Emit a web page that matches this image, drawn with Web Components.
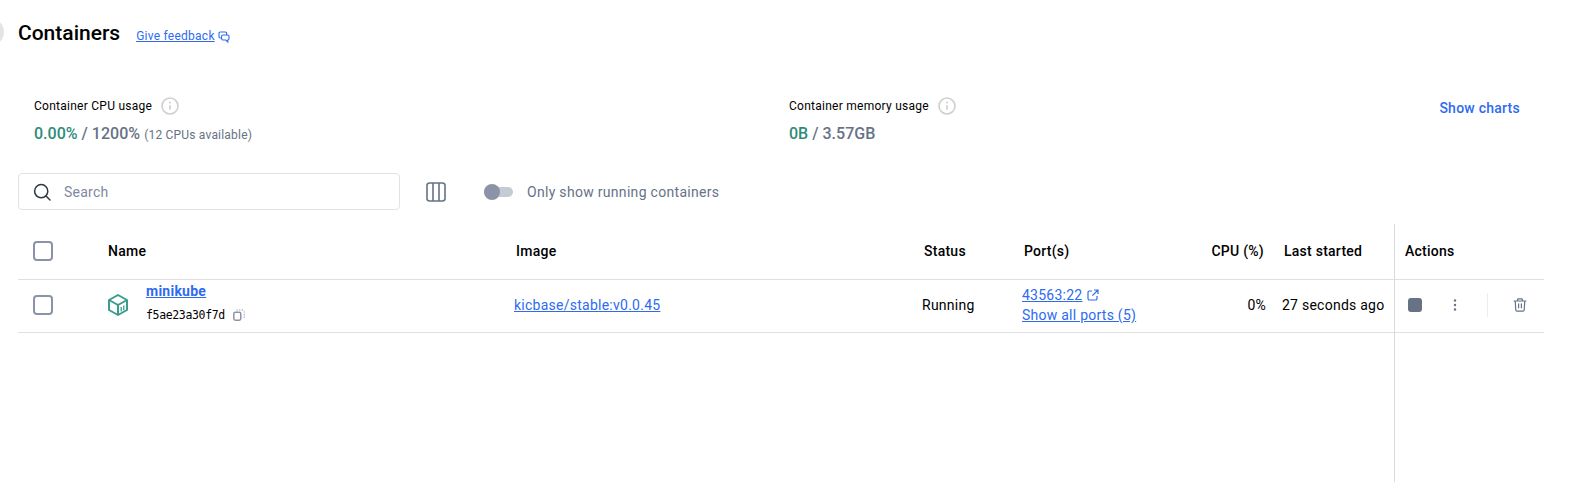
<!DOCTYPE html>
<html>
<head>
<meta charset="utf-8">
<title>Containers</title>
<style>
  html, body { margin: 0; height: 482px; overflow: hidden; background: #fff; }
  body { font-family: Roboto, "Liberation Sans", sans-serif; color: #000; }
</style>
</head>
<body>
<containers-page>
  <page-header slot="header" title="Containers"></page-header>
  <usage-stats slot="stats"></usage-stats>
  <table-toolbar slot="toolbar"></table-toolbar>
  <containers-table slot="table"></containers-table>
</containers-page>

<script>
const ICONS = {
  info: `<svg width="18" height="18" viewBox="0 0 18 18" fill="none"><circle cx="9" cy="9" r="8" stroke="#cfcfcf" stroke-width="1.6"/><circle cx="9" cy="5.6" r="1" fill="#cfcfcf"/><path d="M9 8.2v4.6" stroke="#cfcfcf" stroke-width="1.6"/></svg>`,
  feedback: `<svg width="12" height="12" viewBox="0 0 12 12" fill="none" stroke="#2e6bf0" stroke-width="1.1"><path d="M8.6 4V2.2A1.2 1.2 0 0 0 7.4 1H2.2A1.2 1.2 0 0 0 1 2.2v3.6A1.2 1.2 0 0 0 2.2 7h1.4"/><path d="M4.8 4h5a1.2 1.2 0 0 1 1.2 1.2v2.6A1.2 1.2 0 0 1 9.8 9v2L7.8 9H4.8a1.2 1.2 0 0 1-1.2-1.2V5.2A1.2 1.2 0 0 1 4.8 4z"/></svg>`,
  search: `<svg width="20" height="20" viewBox="0 0 20 20" fill="none" stroke="#2f3744" stroke-width="1.5"><circle cx="9.2" cy="9.2" r="6.6"/><path d="M14 14l4 4" stroke-linecap="round"/></svg>`,
  columns: `<svg width="20" height="20" viewBox="0 0 20 20" fill="none" stroke="#677285" stroke-width="1.6"><rect x="1" y="1" width="18" height="18" rx="2.5"/><path d="M7 1v18M13 1v18"/></svg>`,
  box: `<svg width="20" height="22" viewBox="0 0 20 22" fill="none" stroke="#3a9d8b" stroke-width="2" stroke-linejoin="round"><path d="M10 1l9 5v10l-9 5-9-5V6z"/><path d="M1 6l9 5 9-5M10 11v10"/><path d="M13.2 13v4.6M15.8 11.6v4.6" stroke-width="1.3"/></svg>`,
  copy: `<svg width="12" height="12" viewBox="0 0 12 12" fill="none" stroke="#8b93a5" stroke-width="1.5"><rect x=".8" y="3.2" width="7" height="8" rx="1.6"/><path d="M3.6 1h1.2M6.2 1h1.2M8.8 1h1.4M11.2 2.4v1.2M11.2 5v1.2M11.2 7.6v1.2" stroke-width="1.1"/></svg>`,
  external: `<svg width="12" height="12" viewBox="0 0 12 12" fill="none" stroke="#2e6bf0" stroke-width="1.2"><path d="M5 2H2.4A1.4 1.4 0 0 0 1 3.4v6.2A1.4 1.4 0 0 0 2.4 11h6.2A1.4 1.4 0 0 0 10 9.6V7"/><path d="M7 1h4v4M11 1L5.4 6.6"/></svg>`,
  dots: `<svg width="4" height="12" viewBox="0 0 4 12" fill="#677285"><circle cx="2" cy="1.5" r="1.2"/><circle cx="2" cy="6" r="1.2"/><circle cx="2" cy="10.5" r="1.2"/></svg>`,
  trash: `<svg width="14" height="14" viewBox="0 0 14 14" fill="none" stroke="#677285" stroke-width="1.2"><path d="M.6 3h12.8M4.6 3V1.6a.8.8 0 0 1 .8-.8h3.2a.8.8 0 0 1 .8.8V3"/><path d="M2.2 3l.6 9a1.2 1.2 0 0 0 1.2 1.1h6A1.2 1.2 0 0 0 11.2 12l.6-9"/><path d="M5.6 5.6v4.6M8.4 5.6v4.6"/></svg>`
};

class ContainersPage extends HTMLElement {
  constructor() {
    super();
    this.attachShadow({mode: 'open'}).innerHTML = `
      <style>
        :host { display: flex; flex-direction: column; height: 482px; }
        ::slotted([slot=table]) { flex: 1; min-height: 0; }
      </style>
      <slot name="header"></slot>
      <slot name="stats"></slot>
      <slot name="toolbar"></slot>
      <slot name="table"></slot>
    `;
  }
}

class PageHeader extends HTMLElement {
  constructor() {
    super();
    this.attachShadow({mode: 'open'}).innerHTML = `
      <style>
        :host { display: flex; align-items: center; height: 64px; overflow: hidden; }
        .avatar { width: 28px; height: 28px; border-radius: 50%; background: #e4e4e6; margin-left: -24px; margin-right: 14px; flex: none; }
        h1 { margin: 1px 0 0; font-size: 21px; line-height: 28px; font-weight: 500; color: #000; }
        a { margin-left: 16px; margin-top: 7px; font-size: 12px; color: #2e6bf0; text-decoration: underline; letter-spacing: .25px; }
        svg { display: block; }
        .fb { margin: 10px 0 0 3px; }
      </style>
      <div class="avatar"></div>
      <h1>${this.getAttribute('title')}</h1>
      <a href="#">Give feedback</a>
      <span class="fb">${ICONS.feedback}</span>
    `;
  }
}

class StatBlock extends HTMLElement {
  constructor() {
    super();
    this.attachShadow({mode: 'open'}).innerHTML = `
      <style>
        :host { display: block; }
        .label { display: flex; align-items: center; gap: 9px; height: 20px; font-size: 12px; color: #000; letter-spacing: .26px; }
        .label svg { display: block; }
        .value { margin-top: 8px; height: 20px; line-height: 20px; font-size: 16px; font-weight: 500; color: #677285; white-space: nowrap; letter-spacing: .02px; }
        .used { color: #2e8b7a; }
        small { font-size: 12px; font-weight: 400; letter-spacing: .2px; }
      </style>
      <div class="label"><span>${this.getAttribute('label')}</span>${ICONS.info}</div>
      <div class="value"><span class="used">${this.getAttribute('used')}</span> / ${this.getAttribute('total')} <small>${this.getAttribute('note') || ''}</small></div>
    `;
  }
}

class UsageStats extends HTMLElement {
  constructor() {
    super();
    this.attachShadow({mode: 'open'}).innerHTML = `
      <style>
        :host { display: grid; grid-template-columns: 755px 1fr auto; padding: 32px 64px 0 34px; height: 78px; box-sizing: border-box; }
        .charts { font-size: 14px; font-weight: 500; color: #2e6bf0; margin-top: 2px; line-height: 20px; letter-spacing: .25px; text-decoration: none; }
      </style>
      <stat-block label="Container CPU usage" used="0.00%" total="1200%" note="(12 CPUs available)"></stat-block>
      <stat-block label="Container memory usage" used="0B" total="3.57GB"></stat-block>
      <a class="charts" href="#">Show charts</a>
    `;
  }
}

class SearchBox extends HTMLElement {
  constructor() {
    super();
    this.attachShadow({mode: 'open'}).innerHTML = `
      <style>
        :host { display: flex; align-items: center; gap: 12px; box-sizing: border-box; width: 382px; height: 37px; padding: 0 13px; border: 1px solid #e1e2e6; border-radius: 4px; }
        svg { display: block; flex: none; }
        span { font-size: 14px; color: #7f899c; letter-spacing: .25px; }
      </style>
      ${ICONS.search}<span>Search</span>
    `;
  }
}

class ToggleSwitch extends HTMLElement {
  constructor() {
    super();
    this.attachShadow({mode: 'open'}).innerHTML = `
      <style>
        :host { display: flex; align-items: center; gap: 14px; }
        .track { display: flex; align-items: center; width: 29px; height: 10px; border-radius: 5px; background: #c6cad3; }
        .thumb { width: 16px; height: 16px; border-radius: 50%; background: #8b93a8; }
        span { font-size: 14px; color: #677285; letter-spacing: .3px; }
      </style>
      <div class="track"><div class="thumb"></div></div>
      <span><slot></slot></span>
    `;
  }
}

class TableToolbar extends HTMLElement {
  constructor() {
    super();
    this.attachShadow({mode: 'open'}).innerHTML = `
      <style>
        :host { display: flex; align-items: center; padding: 31px 0 14px 18px; }
        .cols { display: block; margin: 0 38px 0 26px; }
        .cols svg { display: block; }
      </style>
      <search-box></search-box>
      <span class="cols">${ICONS.columns}</span>
      <toggle-switch>Only show running containers</toggle-switch>
    `;
  }
}

class CheckBox extends HTMLElement {
  constructor() {
    super();
    this.attachShadow({mode: 'open'}).innerHTML = `
      <style>
        :host { display: block; box-sizing: border-box; width: 20px; height: 20px; border: 2px solid #8b93a8; border-radius: 4px; }
      </style>
    `;
  }
}

class ContainerRow extends HTMLElement {
  constructor() {
    super();
    this.attachShadow({mode: 'open'}).innerHTML = `
      <style>
        :host { display: grid; grid-template-columns: 90px 38px 368px 408px 100px 170px 90px 1fr; align-items: center; height: 53px; box-sizing: border-box; padding-bottom: 2px; border-bottom: 1px solid #dfe0e3; font-size: 14px; letter-spacing: .25px; color: #000; }
        check-box { margin-left: 15px; }
        svg { display: block; }
        a { color: #2e6bf0; text-decoration: underline; }
        .info { margin-bottom: 7px; }
        .name { display: block; width: max-content; font-weight: 700; line-height: 20px; }
        .id { display: flex; align-items: center; gap: 8px; margin-top: 6px; font: 11.5px/16px "DejaVu Sans Mono", monospace; letter-spacing: -.35px; }
        .ports { line-height: 20px; }
        .ports div { display: flex; align-items: center; gap: 5px; }
        .cpu { text-align: right; padding-right: 16px; }
        .last { white-space: nowrap; }
      </style>
      <check-box></check-box>
      <span>${ICONS.box}</span>
      <div class="info">
        <a class="name" href="#">minikube</a>
        <div class="id">f5ae23a30f7d ${ICONS.copy}</div>
      </div>
      <div><a href="#">kicbase/stable:v0.0.45</a></div>
      <div>Running</div>
      <div class="ports">
        <div><a href="#">43563:22</a>${ICONS.external}</div>
        <a href="#">Show all ports (5)</a>
      </div>
      <div class="cpu">0%</div>
      <div class="last">27 seconds ago</div>
    `;
  }
}

class ContainersTable extends HTMLElement {
  constructor() {
    super();
    this.attachShadow({mode: 'open'}).innerHTML = `
      <style>
        :host { display: flex; margin: 0 40px 0 18px; font-size: 14px; }
        .main { flex: 1; min-width: 0; }
        .head { box-sizing: border-box; height: 56px; padding-bottom: 1px; border-bottom: 1px solid #dfe0e3; align-items: center; font-weight: 500; letter-spacing: .25px; color: #000; }
        .main .head { display: grid; grid-template-columns: 90px 408px 408px 100px 122px 138px 1fr; }
        .main .head check-box { margin-left: 15px; }
        .cpu { text-align: right; padding-right: 20px; margin-left: -20px; }
        .actions { flex: none; width: 149px; border-left: 1px solid #d9dade; }
        .actions .head { display: flex; padding-left: 10px; }
        .buttons { display: flex; align-items: center; height: 53px; box-sizing: border-box; padding-bottom: 2px; border-bottom: 1px solid #dfe0e3; }
        .stop { width: 14px; height: 14px; border-radius: 3px; background: #677285; margin-left: 13px; }
        .dots { margin-left: 31px; }
        .sep { width: 1px; height: 24px; background: #eceded; margin-left: 30px; }
        .trash { margin-left: 25px; }
        svg { display: block; }
      </style>
      <div class="main">
        <div class="head">
          <check-box></check-box>
          <span>Name</span>
          <span>Image</span>
          <span>Status</span>
          <span>Port(s)</span>
          <span class="cpu">CPU (%)</span>
          <span>Last started</span>
        </div>
        <container-row></container-row>
      </div>
      <div class="actions">
        <div class="head">Actions</div>
        <div class="buttons">
          <div class="stop"></div>
          <span class="dots">${ICONS.dots}</span>
          <div class="sep"></div>
          <span class="trash">${ICONS.trash}</span>
        </div>
      </div>
    `;
  }
}

customElements.define('check-box', CheckBox);
customElements.define('stat-block', StatBlock);
customElements.define('search-box', SearchBox);
customElements.define('toggle-switch', ToggleSwitch);
customElements.define('page-header', PageHeader);
customElements.define('usage-stats', UsageStats);
customElements.define('table-toolbar', TableToolbar);
customElements.define('container-row', ContainerRow);
customElements.define('containers-table', ContainersTable);
customElements.define('containers-page', ContainersPage);
</script>
</body>
</html>
